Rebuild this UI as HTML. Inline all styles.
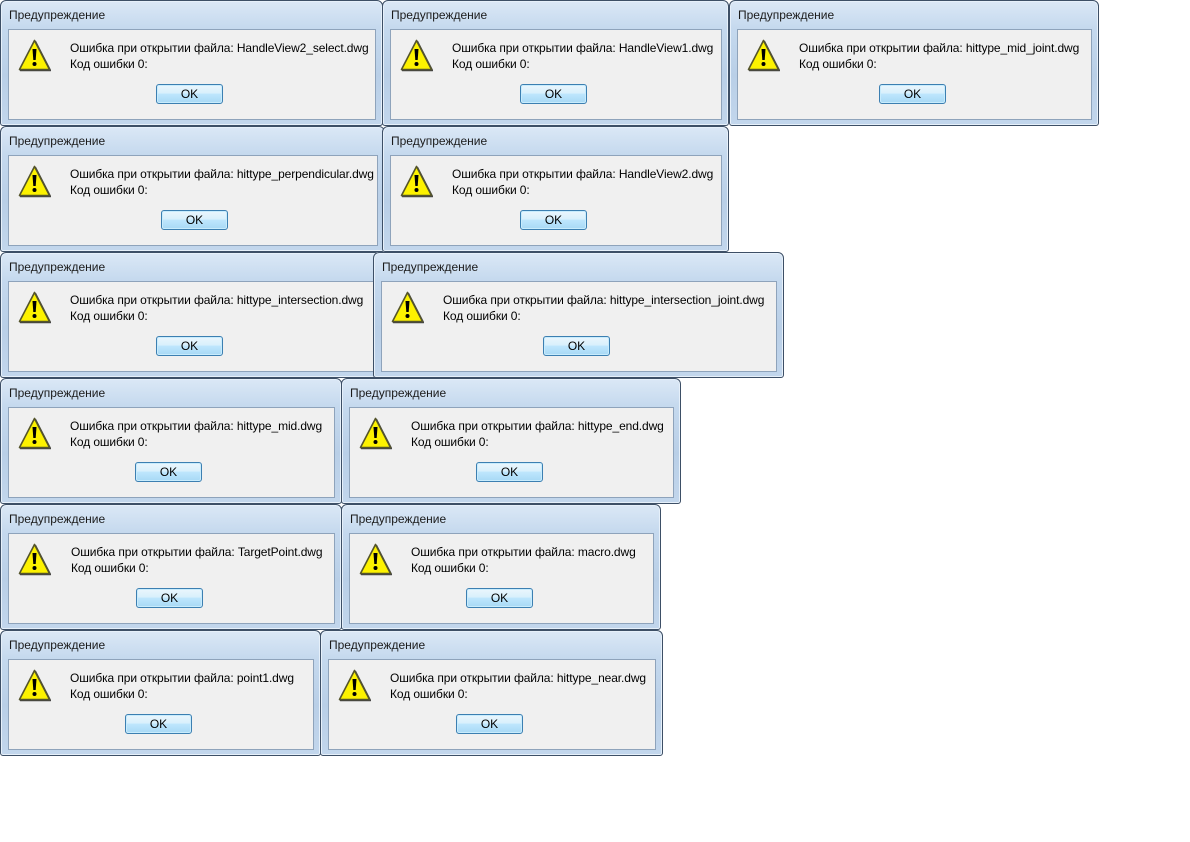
<!DOCTYPE html>
<html><head><meta charset="utf-8">
<style>
body{margin:0;width:1190px;height:842px;background:#fff;position:relative;overflow:hidden;font-family:"Liberation Sans","DejaVu Sans",sans-serif;}
.d{position:absolute;height:126px;border:1px solid #3d4f66;border-radius:6px 6px 3px 3px;background:linear-gradient(180deg,#dbe8f6 0%,#c5d9ee 22%,#b9cfe7 60%,#c2d6ec 100%);box-sizing:border-box;box-shadow:inset 0 0 0 1px #e6f0fa;}
.t{position:absolute;left:8px;top:7px;font-size:12px;color:#1b1b1b;}
.c{position:absolute;left:7px;right:6px;top:28px;height:91px;background:#f0f0f0;border:1px solid #8ea3bb;box-sizing:border-box;}
.i{position:absolute;left:9px;top:9px;width:33px;height:33px;}
.m{position:absolute;left:61px;top:10px;font-size:12px;letter-spacing:-0.1px;line-height:16px;color:#000;white-space:nowrap;}
.b{position:absolute;top:54px;width:67px;height:20px;box-sizing:border-box;border:1px solid #3c7fb1;border-radius:3px;background:linear-gradient(180deg,#eaf6fd 0%,#d9f0fc 45%,#bee6fd 50%,#a7d9f5 100%);font-size:12px;text-align:center;line-height:18px;color:#000;box-shadow:inset 0 0 0 1px #c8ecfd;}
</style></head><body>
<svg width="0" height="0" style="position:absolute"><defs>
<symbol id="w" viewBox="0 0 33 33"><path d="M16.5 1.5 L31.5 30.5 L1.5 30.5 Z" fill="#666" stroke="#444" stroke-width="1.5" stroke-linejoin="round" transform="translate(1,1)"/><path d="M16.5 1.5 L31.5 30.5 L1.5 30.5 Z" fill="#fdf200" stroke="#55552a" stroke-width="1.6" stroke-linejoin="round"/><path d="M14.5 10 h4 l-0.8 11 h-2.4 z" fill="#000"/><circle cx="16.5" cy="25" r="2" fill="#000"/></symbol>
</defs></svg>

<div class="d" style="left:0;top:0;width:383px"><div class="t">Предупреждение</div><div class="c"><svg class="i"><use href="#w"/></svg><div class="m">Ошибка при открытии файла: HandleView2_select.dwg<br>Код ошибки 0:</div><div class="b" style="left:147px">OK</div></div></div>
<div class="d" style="left:382px;top:0;width:347px"><div class="t">Предупреждение</div><div class="c"><svg class="i"><use href="#w"/></svg><div class="m">Ошибка при открытии файла: HandleView1.dwg<br>Код ошибки 0:</div><div class="b" style="left:129px">OK</div></div></div>
<div class="d" style="left:729px;top:0;width:370px"><div class="t">Предупреждение</div><div class="c"><svg class="i"><use href="#w"/></svg><div class="m">Ошибка при открытии файла: hittype_mid_joint.dwg<br>Код ошибки 0:</div><div class="b" style="left:141px">OK</div></div></div>

<div class="d" style="left:0;top:126px;width:385px"><div class="t">Предупреждение</div><div class="c"><svg class="i"><use href="#w"/></svg><div class="m">Ошибка при открытии файла: hittype_perpendicular.dwg<br>Код ошибки 0:</div><div class="b" style="left:152px">OK</div></div></div>
<div class="d" style="left:382px;top:126px;width:347px"><div class="t">Предупреждение</div><div class="c"><svg class="i"><use href="#w"/></svg><div class="m">Ошибка при открытии файла: HandleView2.dwg<br>Код ошибки 0:</div><div class="b" style="left:129px">OK</div></div></div>

<div class="d" style="left:0;top:252px;width:381px"><div class="t">Предупреждение</div><div class="c"><svg class="i"><use href="#w"/></svg><div class="m">Ошибка при открытии файла: hittype_intersection.dwg<br>Код ошибки 0:</div><div class="b" style="left:147px">OK</div></div></div>
<div class="d" style="left:373px;top:252px;width:411px"><div class="t">Предупреждение</div><div class="c"><svg class="i"><use href="#w"/></svg><div class="m">Ошибка при открытии файла: hittype_intersection_joint.dwg<br>Код ошибки 0:</div><div class="b" style="left:161px">OK</div></div></div>

<div class="d" style="left:0;top:378px;width:342px"><div class="t">Предупреждение</div><div class="c"><svg class="i"><use href="#w"/></svg><div class="m">Ошибка при открытии файла: hittype_mid.dwg<br>Код ошибки 0:</div><div class="b" style="left:126px">OK</div></div></div>
<div class="d" style="left:341px;top:378px;width:340px"><div class="t">Предупреждение</div><div class="c"><svg class="i"><use href="#w"/></svg><div class="m">Ошибка при открытии файла: hittype_end.dwg<br>Код ошибки 0:</div><div class="b" style="left:126px">OK</div></div></div>

<div class="d" style="left:0;top:504px;width:342px"><div class="t">Предупреждение</div><div class="c"><svg class="i"><use href="#w"/></svg><div class="m" style="left:62px">Ошибка при открытии файла: TargetPoint.dwg<br>Код ошибки 0:</div><div class="b" style="left:127px">OK</div></div></div>
<div class="d" style="left:341px;top:504px;width:320px"><div class="t">Предупреждение</div><div class="c"><svg class="i"><use href="#w"/></svg><div class="m">Ошибка при открытии файла: macro.dwg<br>Код ошибки 0:</div><div class="b" style="left:116px">OK</div></div></div>

<div class="d" style="left:0;top:630px;width:321px"><div class="t">Предупреждение</div><div class="c"><svg class="i"><use href="#w"/></svg><div class="m">Ошибка при открытии файла: point1.dwg<br>Код ошибки 0:</div><div class="b" style="left:116px">OK</div></div></div>
<div class="d" style="left:320px;top:630px;width:343px"><div class="t">Предупреждение</div><div class="c"><svg class="i"><use href="#w"/></svg><div class="m">Ошибка при открытии файла: hittype_near.dwg<br>Код ошибки 0:</div><div class="b" style="left:127px">OK</div></div></div>
</body></html>
